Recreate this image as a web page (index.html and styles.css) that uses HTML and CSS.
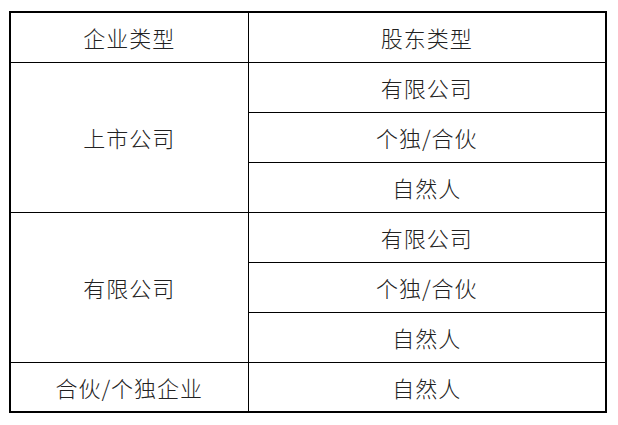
FILE: index.html
```html
<!DOCTYPE html>
<html lang="zh">
<head>
<meta charset="utf-8">
<link rel="stylesheet" href="styles.css">
</head>
<body>
<table class="grid">
  <colgroup><col class="c1"><col class="c2"></colgroup>
  <tr><td>企业类型</td><td>股东类型</td></tr>
  <tr><td rowspan="3">上市公司</td><td>有限公司</td></tr>
  <tr><td>个独/合伙</td></tr>
  <tr><td>自然人</td></tr>
  <tr><td rowspan="3">有限公司</td><td>有限公司</td></tr>
  <tr><td>个独/合伙</td></tr>
  <tr><td>自然人</td></tr>
  <tr><td>合伙/个独企业</td><td>自然人</td></tr>
</table>
</body>
</html>
```

FILE: styles.css
```css
html, body {
  margin: 0;
  padding: 0;
  background: #fff;
}
body {
  padding: 11px 0 0 9px;
}
.grid {
  border-collapse: collapse;
  border: 2px solid #000;
  width: 598px;
  font-family: "Noto Sans CJK SC", sans-serif;
  font-weight: 300;
  font-size: 22px;
  color: #222;
  table-layout: fixed;
}
.c1 { width: 238px; }
.c2 { width: 358px; }
.grid tr { height: 50px; }
.grid td {
  border: 1px solid #000;
  padding: 0;
  text-align: center;
  vertical-align: middle;
  line-height: 1;
  letter-spacing: 1px;
}
```
